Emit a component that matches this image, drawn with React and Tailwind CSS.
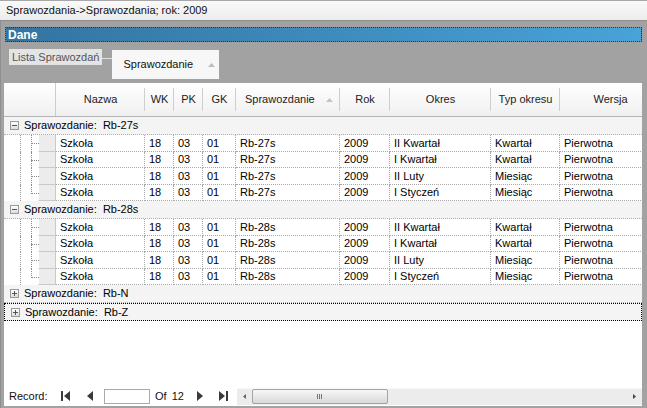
import React from "react";

const cols = [
  { key: "nazwa", label: "Nazwa", w: "w-[89px]" },
  { key: "wk", label: "WK", w: "w-[29px]" },
  { key: "pk", label: "PK", w: "w-[29px]" },
  { key: "gk", label: "GK", w: "w-[33px]" },
  { key: "spr", label: "Sprawozdanie", w: "w-[104px]", sort: true },
  { key: "rok", label: "Rok", w: "w-[50px]" },
  { key: "okres", label: "Okres", w: "w-[101px]" },
  { key: "typ", label: "Typ okresu", w: "w-[69px]" },
  { key: "wersja", label: "Wersja", w: "w-[101px]" },
];

const periods = [
  ["II Kwartał", "Kwartał"],
  ["I Kwartał", "Kwartał"],
  ["II Luty", "Miesiąc"],
  ["I Styczeń", "Miesiąc"],
];

const makeRows = (spr) =>
  periods.map(([okres, typ]) => ({
    nazwa: "Szkoła",
    wk: "18",
    pk: "03",
    gk: "01",
    spr,
    rok: "2009",
    okres,
    typ,
    wersja: "Pierwotna",
  }));

const groups = [
  { name: "Rb-27s", open: true, rows: makeRows("Rb-27s") },
  { name: "Rb-28s", open: true, rows: makeRows("Rb-28s") },
  { name: "Rb-N", open: false, rows: [] },
  { name: "Rb-Z", open: false, rows: [], focus: true },
];

const ExpandBox = ({ open }) => (
  <div className="w-[9px] h-[9px] border border-[#9a9a9a] bg-gradient-to-b from-white to-[#dcdcdc] flex items-center justify-center">
    <div className="relative w-[5px] h-[5px] flex items-center justify-center">
      <div className="w-[5px] h-px bg-[#555]" />
      {!open && <div className="absolute w-px h-[5px] bg-[#555]" />}
    </div>
  </div>
);

const GroupRow = ({ g }) => (
  <div
    className={
      "h-[18px] flex items-center bg-[#f4f4f4] border-b border-dotted " +
      (g.focus ? "border border-black" : "border-[#b0b0b0]")
    }
  >
    <div className="w-[19px] flex justify-center pl-[1px]">
      <ExpandBox open={g.open} />
    </div>
    <span className="whitespace-pre text-black pl-[1px]">Sprawozdanie:  {g.name}</span>
  </div>
);

const DataRow = ({ r, last }) => (
  <div className="h-[16.5px] flex">
    <div className="w-[16px] shrink-0" />
    <div className="w-[18px] shrink-0 border-l border-dotted border-[#9a9a9a] relative">
      <div
        className={
          "absolute left-[10px] top-0 w-px border-l border-dotted border-[#8a8a8a] " +
          (last ? "h-[9px]" : "h-full")
        }
      />
      <div className="absolute left-[10px] top-[8px] w-[8px] border-t border-dotted border-[#8a8a8a]" />
    </div>
    <div className="w-[18px] shrink-0 bg-[#ececec] border-r border-b border-[#c9c9c9] border-l border-l-white" />
    {cols.map((c) => (
      <div
        key={c.key}
        className={
          c.w +
          " shrink-0 pl-[4px] flex items-center border-r border-b border-dotted border-[#a8a8a8] text-black whitespace-nowrap overflow-hidden"
        }
      >
        {r[c.key]}
      </div>
    ))}
  </div>
);

const TriLeft = () => (
  <svg width="6" height="10" viewBox="0 0 6 10">
    <path d="M6 0 L0 5 L6 10 Z" fill="#3a3a3a" />
  </svg>
);
const TriRight = () => (
  <svg width="6" height="10" viewBox="0 0 6 10">
    <path d="M0 0 L6 5 L0 10 Z" fill="#3a3a3a" />
  </svg>
);

export default function App() {
  return (
    <div
      className="w-[647px] h-[408px] overflow-hidden bg-[#a2a2a2] flex flex-col text-[11px]"
      style={{ fontFamily: '"Liberation Sans", Arial, sans-serif' }}
    >
      {/* title */}
      <div className="h-[21px] shrink-0 bg-gradient-to-b from-[#fafafa] to-[#ececec] border-t border-[#a8a8a8] border-b border-b-[#8e8e8e] flex items-center pl-[6px] text-[#111]">
        Sprawozdania-&gt;Sprawozdania; rok: 2009
      </div>

      <div className="flex-1 flex flex-col pl-[3px] pr-[5px] pt-[6px] pb-[2px] border-l border-[#8f8f8f]">
        {/* Dane bar */}
        <div className="h-[15px] shrink-0 ml-[1px] border border-dotted border-[#1b3950] bg-gradient-to-r from-[#3374a1] to-[#48a3d8] flex items-center pl-[2px]">
          <span className="text-white font-bold text-[12px] leading-none">Dane</span>
        </div>

        {/* grouping area */}
        <div className="h-[41px] shrink-0 flex items-start pt-[7px] pl-[5px]">
          <div className="bg-[#e4e4e4] text-[#555] px-[3px] h-[16px] flex items-center">Lista Sprawozdań</div>
          <div className="w-[10px] h-px bg-[#e0e0e0] mt-[9px]" />
          <div className="bg-[#f7f7f7] w-[107px] h-[29px] mt-[1px] flex items-center pl-[11px] text-[#111]">
            Sprawozdanie
            <svg className="ml-[15px]" width="7" height="4" viewBox="0 0 7 4">
              <path d="M0 4 L3.5 0 L7 4 Z" fill="#bdbdbd" />
            </svg>
          </div>
        </div>

        {/* grid */}
        <div className="flex-1 bg-white flex flex-col overflow-hidden">
          {/* header */}
          <div className="h-[34px] shrink-0 flex bg-gradient-to-b from-white to-[#f0f0f0] border-b border-[#b4b4b4] text-[#222]">
            <div className="w-[52px] shrink-0 border-r border-[#cdcdcd]" />
            {cols.map((c) => (
              <div
                key={c.key}
                className={
                  c.w +
                  " shrink-0 relative flex items-center justify-center whitespace-nowrap after:content-[''] after:absolute after:right-0 after:top-[5px] after:bottom-[5px] after:w-px after:bg-[#cfcfcf]"
                }
              >
                {c.sort ? (
                  <div className="w-full flex items-center pl-[9px]">
                    <span>{c.label}</span>
                    <svg className="ml-[11px]" width="7" height="4" viewBox="0 0 7 4">
                      <path d="M0 4 L3.5 0 L7 4 Z" fill="#c4c4c4" />
                    </svg>
                  </div>
                ) : (
                  c.label
                )}
              </div>
            ))}
          </div>

          {/* body */}
          <div className="flex-1 overflow-hidden">
            {groups.map((g) => (
              <div key={g.name}>
                <GroupRow g={g} />
                {g.open &&
                  g.rows.map((r, i) => <DataRow key={i} r={r} last={i === g.rows.length - 1} />)}
              </div>
            ))}
          </div>

          {/* navigator */}
          <div className="h-[20px] shrink-0 flex items-center text-[#111]">
            <span className="pl-[5px] w-[57px]">Record:</span>
            <div className="flex items-center w-[26px]">
              <div className="w-[2px] h-[10px] bg-[#3a3a3a] mr-[1px]" />
              <TriLeft />
            </div>
            <div className="w-[17px] flex items-center">
              <TriLeft />
            </div>
            <div className="w-[46px] h-[15px] border border-[#a9a9a9] bg-white" />
            <span className="ml-[5px]">Of</span>
            <span className="ml-[5px]">12</span>
            <div className="ml-[13px] w-[22px] flex items-center">
              <TriRight />
            </div>
            <div className="flex items-center w-[18px]">
              <TriRight />
              <div className="w-[2px] h-[10px] bg-[#3a3a3a] ml-[1px]" />
            </div>
            {/* horizontal scrollbar */}
            <div className="flex-1 h-[17px] bg-[#ececec] flex items-center border-t border-[#f8f8f8]">
              <div className="w-[15px] h-full flex items-center justify-center">
                <svg width="3" height="5" viewBox="0 0 3 5">
                  <path d="M3 0 L0 2.5 L3 5 Z" fill="#666" />
                </svg>
              </div>
              <div className="w-[136px] h-[15px] rounded-[2px] border border-[#a3a3a3] bg-gradient-to-b from-[#f7f7f7] to-[#d9d9d9] flex items-center justify-center gap-[1px]">
                <div className="w-px h-[5px] bg-[#777]" />
                <div className="w-px h-[5px] bg-[#777]" />
                <div className="w-px h-[5px] bg-[#777]" />
              </div>
              <div className="flex-1" />
              <div className="w-[15px] h-full flex items-center justify-center">
                <svg width="3" height="5" viewBox="0 0 3 5">
                  <path d="M0 0 L3 2.5 L0 5 Z" fill="#444" />
                </svg>
              </div>
            </div>
          </div>
        </div>
      </div>
    </div>
  );
}
